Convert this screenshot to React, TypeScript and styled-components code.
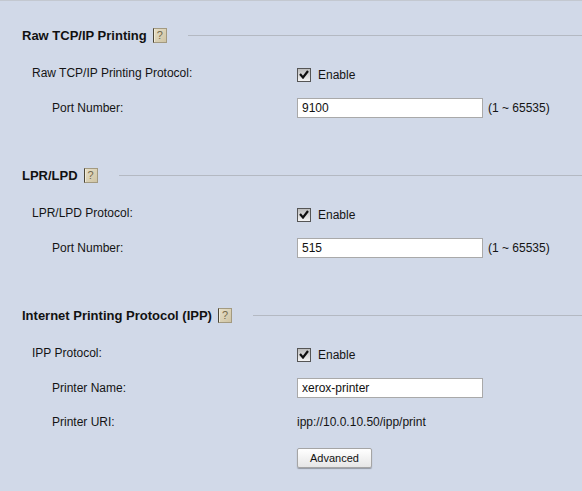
import React from "react";
import styled, { createGlobalStyle } from "styled-components";

const Global = createGlobalStyle`
  html, body { margin: 0; padding: 0; background: #d1d9e8; }
  body { font-family: "Liberation Sans", Arial, sans-serif; font-size: 12px; color: #141414; overflow: hidden; }
`;

const Page = styled.div`
  width: 582px;
  height: 491px;
  box-sizing: border-box;
  border-top: 1px solid #c3c8d0;
  padding-top: 24px;
  overflow: hidden;
`;

const Section = styled.section`
  height: 140px;
  padding-left: 22px;
  box-sizing: border-box;
`;

const Heading = styled.div`
  display: flex;
  align-items: center;
  height: 20px;
  margin-bottom: 13px;
`;

const Title = styled.h2`
  margin: 0;
  font-size: 13px;
  font-weight: bold;
  color: #111;
  white-space: nowrap;
`;

const Help = styled.span`
  box-sizing: border-box;
  width: 14px;
  height: 15px;
  margin-left: 6px;
  background: linear-gradient(135deg, #e6dfc8, #cfc4a4);
  border: 1px solid #a39a80;
  border-left: 1px solid #4a4536;
  box-shadow: inset 1px 0 0 #f0ead8;
  color: #74684a;
  font-size: 11px;
  font-weight: normal;
  line-height: 13px;
  text-align: center;
`;

const Rule = styled.span`
  flex: 1;
  height: 1px;
  margin-left: 21px;
  background: #b4b9c2;
`;

const Row = styled.div<{ $h: number }>`
  display: flex;
  align-items: center;
  height: ${(p) => p.$h}px;
`;

const Label = styled.div<{ $sub?: boolean }>`
  width: 275px;
  box-sizing: border-box;
  padding-left: ${(p) => (p.$sub ? 30 : 10)}px;
`;

const RaisedLabel = styled(Label)`
  margin-bottom: 4px;
`;

const Value = styled.div`
  display: flex;
  align-items: center;
`;

const Box = styled.span`
  box-sizing: border-box;
  width: 14px;
  height: 14px;
  border: 1px solid #555;
  background: linear-gradient(#bdbdbd, #f4f4f4);
  display: flex;
  align-items: center;
  justify-content: center;
`;

const EnableText = styled.span`
  margin-left: 7px;
`;

const Input = styled.input`
  box-sizing: border-box;
  width: 186px;
  height: 20px;
  border: 1px solid #a9a9a9;
  background: #fff;
  padding: 0 4px;
  margin: 0;
  font: 12px "Liberation Sans", Arial, sans-serif;
  color: #111;
  outline: none;
`;

const Hint = styled.span`
  margin-left: 5px;
`;

const Button = styled.button`
  box-sizing: border-box;
  width: 75px;
  height: 20px;
  margin: 0;
  padding: 0;
  border: 1px solid #a5a5a5;
  border-radius: 2px;
  background: linear-gradient(#ffffff, #e6e6e6);
  box-shadow: 0 1px 1px rgba(0, 0, 0, 0.3);
  font: 11px "Liberation Sans", Arial, sans-serif;
  color: #111;
`;

const Check = () => (
  <Box>
    <svg width="10" height="9" viewBox="0 0 10 9">
      <path d="M1 4 L4 7.5 L9 1" fill="none" stroke="#111" strokeWidth="2.2" />
    </svg>
  </Box>
);

const EnableRow = ({ label }: { label: string }) => (
  <Row $h={33}>
    <RaisedLabel>{label}</RaisedLabel>
    <Value>
      <Check />
      <EnableText>Enable</EnableText>
    </Value>
  </Row>
);

const PortRow = ({ value }: { value: string }) => (
  <Row $h={33}>
    <Label $sub>Port Number:</Label>
    <Value>
      <Input readOnly value={value} />
      <Hint>(1 ~ 65535)</Hint>
    </Value>
  </Row>
);

const Head = ({ title }: { title: string }) => (
  <Heading>
    <Title>{title}</Title>
    <Help>?</Help>
    <Rule />
  </Heading>
);

export default function App() {
  return (
    <Page>
      <Global />
      <Section>
        <Head title="Raw TCP/IP Printing" />
        <EnableRow label="Raw TCP/IP Printing Protocol:" />
        <PortRow value="9100" />
      </Section>
      <Section>
        <Head title="LPR/LPD" />
        <EnableRow label="LPR/LPD Protocol:" />
        <PortRow value="515" />
      </Section>
      <Section>
        <Head title="Internet Printing Protocol (IPP)" />
        <EnableRow label="IPP Protocol:" />
        <Row $h={33}>
          <Label $sub>Printer Name:</Label>
          <Value>
            <Input readOnly value="xerox-printer" />
          </Value>
        </Row>
        <Row $h={35}>
          <Label $sub>Printer URI:</Label>
          <Value>ipp://10.0.10.50/ipp/print</Value>
        </Row>
        <Row $h={37}>
          <Label />
          <Value>
            <Button>Advanced</Button>
          </Value>
        </Row>
      </Section>
    </Page>
  );
}
